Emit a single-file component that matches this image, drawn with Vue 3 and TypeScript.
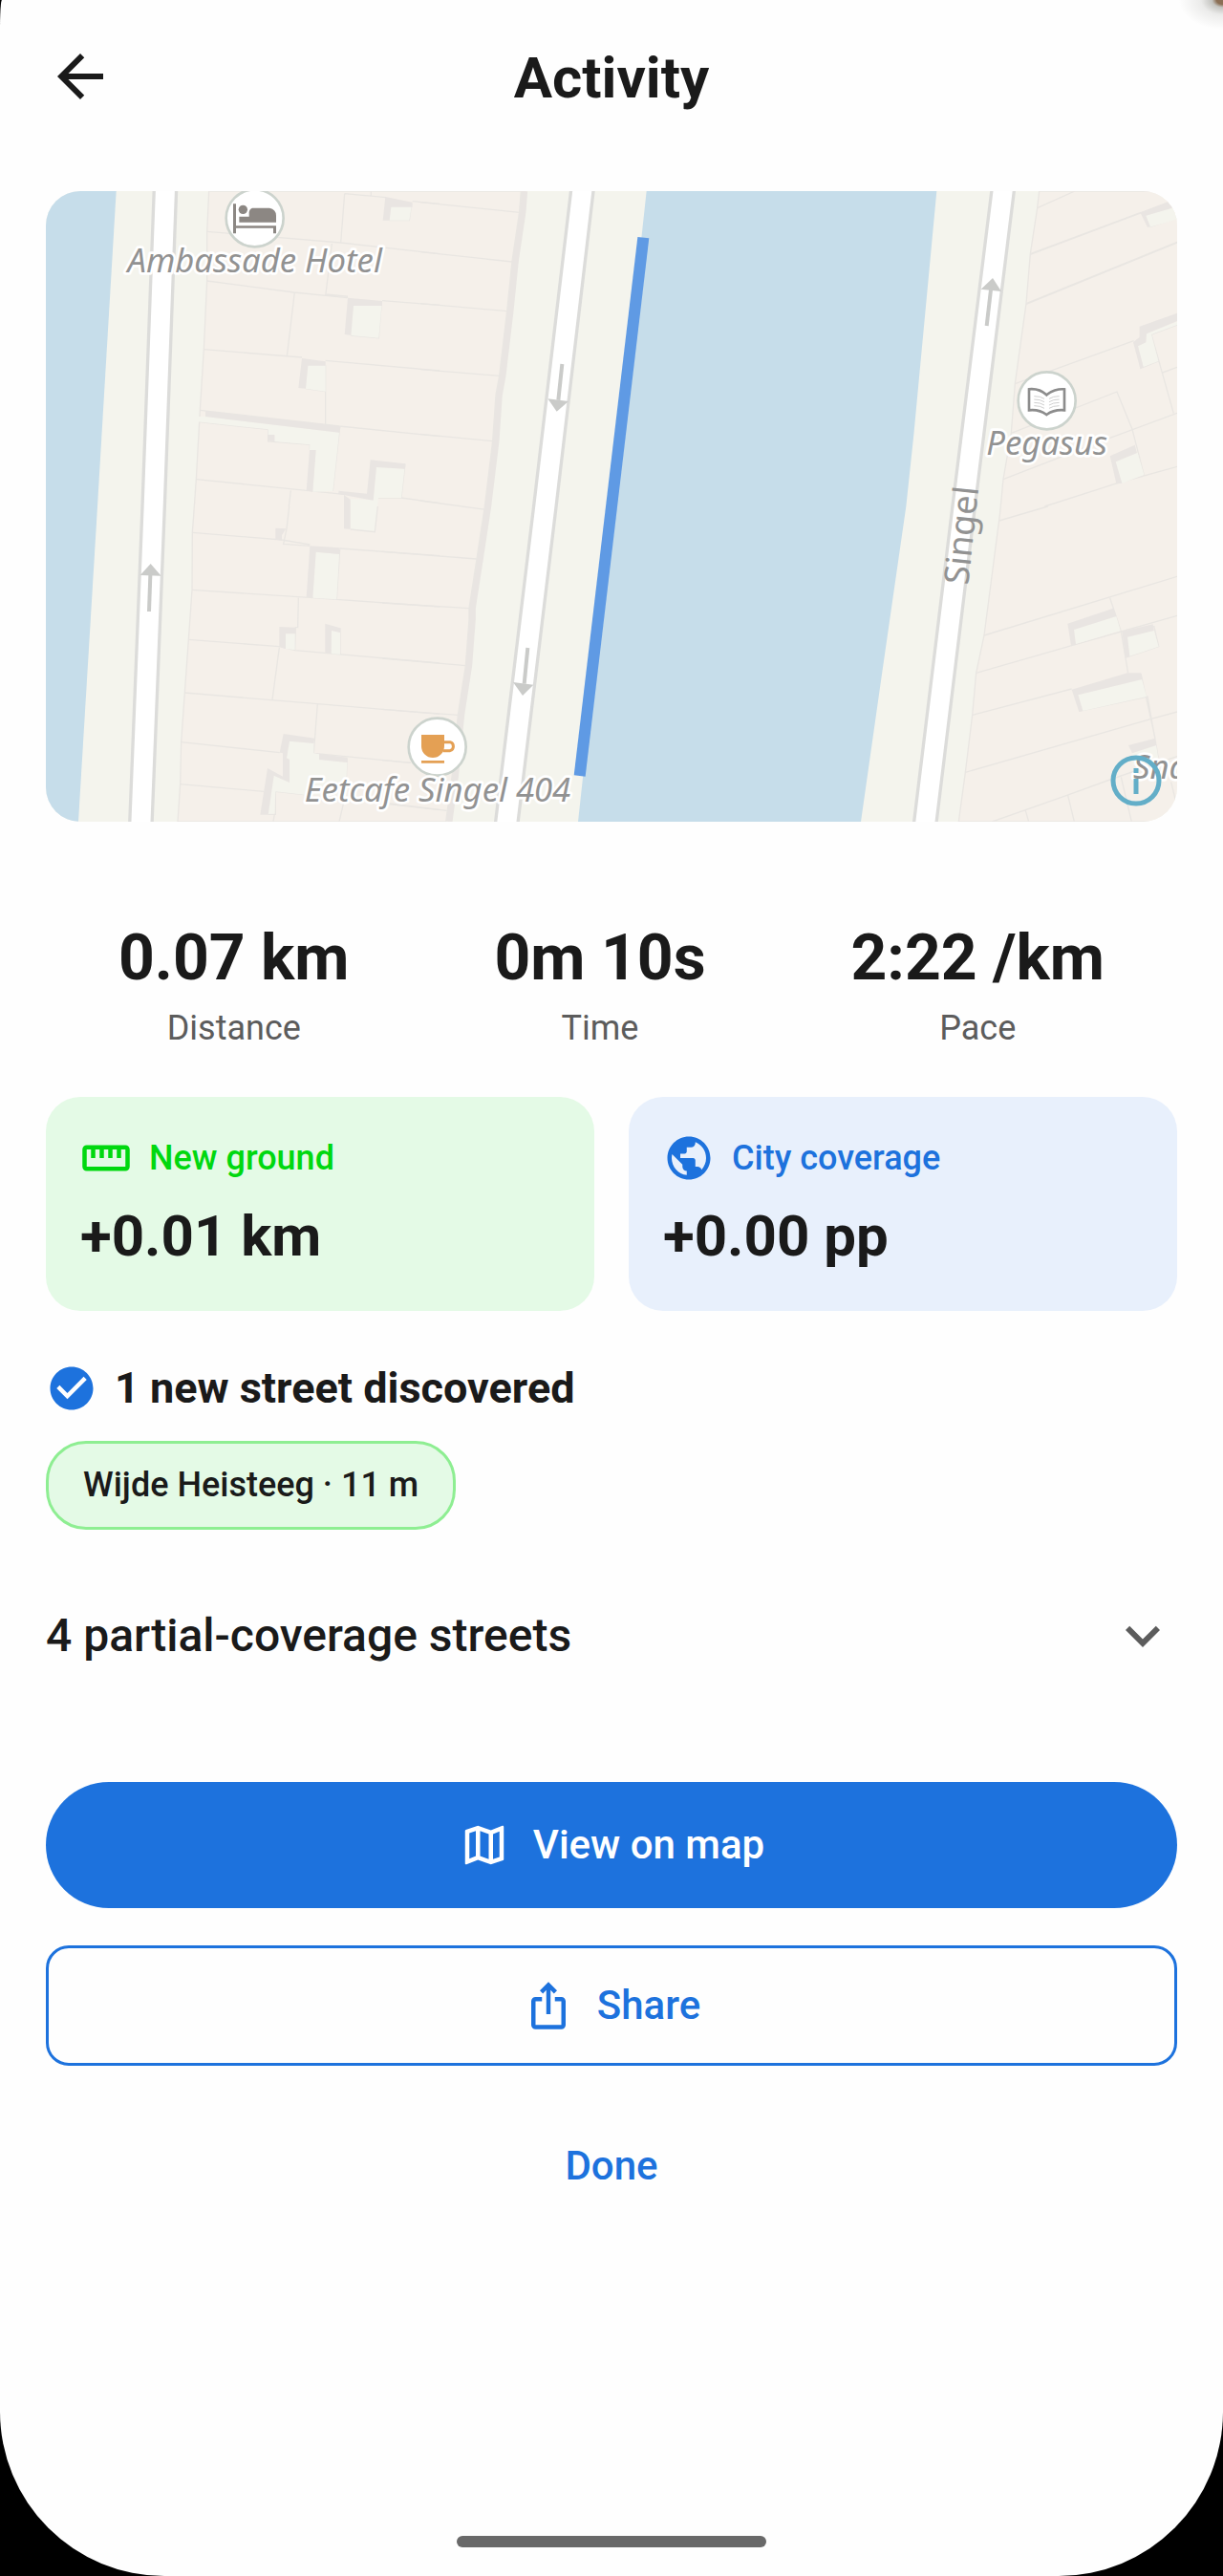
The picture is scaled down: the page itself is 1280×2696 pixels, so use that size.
<script setup lang="ts">
interface Stat {
  value: string
  label: string
}

interface Highlight {
  tone: string
  label: string
  value: string
  icon: string
}

interface MapTile {
  x: number
  y: number
  shade: string
  yard: string
  walls: string
}

const icons = {
  back: 'M20 11H7.83l5.59-5.59L12 4l-8 8 8 8 1.41-1.41L7.83 13H20v-2z',
  ruler:
    'M21 6H3c-1.1 0-2 .9-2 2v8c0 1.1.9 2 2 2h18c1.1 0 2-.9 2-2V8c0-1.1-.9-2-2-2zm0 10H3V8h2v4h2V8h2v4h2V8h2v4h2V8h2v4h2V8h2v8z',
  globe:
    'M12 2C6.48 2 2 6.48 2 12s4.48 10 10 10 10-4.48 10-10S17.52 2 12 2zm-1 17.93c-3.95-.49-7-3.85-7-7.93 0-.62.08-1.21.21-1.79L9 15v1c0 1.1.9 2 2 2v1.93zm6.9-2.54c-.26-.81-1-1.39-1.9-1.39h-1v-3c0-.55-.45-1-1-1H8v-2h2c.55 0 1-.45 1-1V7h2c1.1 0 2-.9 2-2v-.41c2.93 1.19 5 4.06 5 7.41 0 2.08-.8 3.97-2.1 5.39z',
  check:
    'M12 2C6.48 2 2 6.48 2 12s4.48 10 10 10 10-4.48 10-10S17.52 2 12 2zm-2 15l-5-5 1.41-1.41L10 14.17l7.59-7.59L19 8l-9 9z',
  chevron: 'M16.59 8.59L12 13.17 7.41 8.59 6 10l6 6 6-6z',
  map: 'M20.5 3l-.16.03L15 5.1 9 3 3.36 4.9c-.21.07-.36.25-.36.48V20.5c0 .28.22.5.5.5l.16-.03L9 18.9l6 2.1 5.64-1.9c.21-.07.36-.25.36-.48V3.5c0-.28-.22-.5-.5-.5zM10 5.47l4 1.4v11.66l-4-1.4V5.47zm-5 .99l3-1.01v11.7l-3 1.16V6.46zm14 11.08l-3 1.01V6.86l3-1.16v11.84z',
  share:
    'M16 5l-1.42 1.42-1.59-1.59V16h-1.98V4.83L9.42 6.42 8 5l4-4 4 4zm4 5v11c0 1.1-.9 2-2 2H6c-1.11 0-2-.9-2-2V10c0-1.11.89-2 2-2h3v2H6v11h12V10h-3V8h3c1.1 0 2 .89 2 2z',
}

const stats: Stat[] = [
  { value: '0.07 km', label: 'Distance' },
  { value: '0m 10s', label: 'Time' },
  { value: '2:22 /km', label: 'Pace' },
]

const highlights: Highlight[] = [
  { tone: 'green', label: 'New ground', value: '+0.01 km', icon: icons.ruler },
  { tone: 'blue', label: 'City coverage', value: '+0.00 pp', icon: icons.globe },
]

const streets: string[] = ['Wijde Heisteeg · 11 m']

// Roads run top to bottom; each is stroked twice, casing first.
const roads: string[] = [
  'M375 -10L338 990L298 1990',
  'M1685 -10L1567 990L1446 1990',
  'M3006 -10L2882 990L2760 1990',
]

// Building detail, one entry per map tile, in the tile's own coordinates.
const tiles: MapTile[] = [
  {
    x: -24,
    y: -30,
    shade:
      'M1090 48L1175 65V80H1108L1103 122H1082ZM972 365L1080 375V390H990L982 483L962 480ZM828 555L902 565V578H847L840 650L817 648ZM525 720L950 768L945 788L525 738ZM720 795H742V816L720 814ZM852 843H872L862 974L842 970ZM1043 874L1152 886L1150 902L1062 897L1052 1001L942 981L944 971L1032 980ZM960 984L980 998V1092L960 1090Z',
    yard: 'M1108 75L1172 78L1165 122H1103ZM990 386L1078 390L1069 491L982 483ZM847 575L902 577V659L840 650ZM500 738L525 738L945 788L925 972L862 974L872 843H852L853 826L742 816V796L722 795V778L500 754ZM1062 895L1150 902L1140 993H1068L1057 1100L980 1092V997L1052 1000Z',
    walls:
      'M530 157L950 192L1260 227M962 38L950 192M962 38L1092 50M1045 30V45M1175 62L1260 70M922 195L902 360M530 312L803 348L970 365M902 354L970 360V366M805 348L781 548M1080 374L1260 388M520 527L828 552M902 562L1260 594M902 577V768M508 718L945 768M945 768L1260 800M947 770L925 972M506 755L722 778V816L853 826V843M496 935L842 970L960 982M793 970L787 1020M1068 993H1140L1260 1010M1152 886L1140 993M1078 378L1069 491L982 483M840 650L902 659M1172 70L1165 122H1103',
  },
  {
    x: -24,
    y: 990,
    shade:
      'M745 68L778 70L765 90V107L745 104ZM853 124L947 130L945 150L872 143L862 287L842 285ZM757 378L808 380V400H777V447L757 440ZM901 368L948 382V396L921 390L920 463L901 460ZM770 714L868 728L865 744L789 737L780 790L789 795V867L740 845L722 968H697L720 822L768 848V775L758 773ZM882 776L970 788V804L882 795Z',
    yard: 'M872 143L945 150L937 292L862 287ZM777 400H806V450L777 447ZM921 390L948 395V464L920 463ZM789 737L865 744V775L882 778V795L970 804L965 905H835L745 895L742 965H722L740 845L789 867V793L780 790Z',
    walls:
      'M788 0L780 70L770 118L853 124M484 82L765 105L853 120M947 132L1260 155M1066 0L1057 80L980 72M483 262L862 287L1260 315M937 292L947 135M817 287L815 380H808L806 452M472 418L757 440L806 452L1260 492M948 382V464M757 443L735 607M460 585L877 620L1260 652M877 620L865 775L1170 805M449 740L758 773M446 872L708 895M722 967H745L745 895L835 905M742 965L738 990M970 790L965 905L945 990M1100 935L1260 953',
  },
  {
    x: 1176,
    y: -30,
    shade: '',
    yard: '',
    walls:
      'M0 65L311 97M0 221L288 252M0 383L272 407M0 590L248 610M0 793L227 815M0 1002L205 1030',
  },
  {
    x: 1056,
    y: 990,
    shade: '',
    yard: '',
    walls:
      'M0 142L297 165M0 303L273 320M0 477L262 500M0 637L238 655M0 797L90 805M0 930L203 955',
  },
  {
    x: 2376,
    y: -30,
    shade:
      'M1060 97L1200 43V72L1078 107L1092 142L1083 144ZM1058 455L1176 413V438L1080 478L1078 505L1053 517L1070 582L1060 587L1038 505L1058 488ZM965 862L1043 827L1050 852L983 880L1003 947L985 948Z',
    yard: 'M1078 107L1157 82H1200V112L1090 143ZM1080 478L1176 440V450L1095 480L1117 564L1070 582L1053 517L1078 505ZM983 880L1052 852L1072 920L1003 948Z',
    walls:
      'M737 83L855 30M715 227L1062 97M702 383L1176 190M667 635L1040 500M655 790L987 660L1035 778L1072 922M630 935L965 805L1176 727M760 1020L985 948L1176 895M1176 450L1095 480L1165 728M1130 600L1176 583M1060 587L1117 564M1090 143L1176 114M715 229L1150 66M702 385L1176 192',
  },
  {
    x: 2376,
    y: 990,
    shade:
      'M832 368L975 320L985 345L852 387L858 434L843 437ZM1003 392L1100 370L1103 390L1020 410L1027 470L1013 475ZM845 575L1020 523H1062L1066 543L865 592L880 642L868 645ZM1023 750L1107 728L1110 750L1035 775Z',
    yard: 'M852 387L985 345L998 390L858 432ZM1020 410L1103 390L1118 440L1027 470ZM865 592L1065 543L1080 597L880 642ZM1035 775L1110 750L1117 790L1035 812Z',
    walls:
      'M617 45L770 0M570 405L1176 220M545 523L845 437L1000 393L1176 343M965 287L1000 393L1022 523M1103 375L1118 440L1013 475M533 655L845 573M511 835L1092 668L1176 645M868 643L1083 597L1117 790M1062 525L1107 728M595 990L830 907L965 858L1176 785M700 955L710 990M833 907L853 990M1000 850L1033 990M1157 865L1180 960',
  },
]

// Direction arrows on one-way streets: filled head and stroked stem.
const arrows: { head: string; stem: string }[] = [
  { head: 'M329 1170L296 1206L362 1208Z', stem: 'M328 1206L324 1320' },
  { head: 'M1576 652L1641 660L1604 692Z', stem: 'M1621 543L1609 656' },
  { head: 'M1467 1542L1531 1550L1497 1584Z', stem: 'M1513 1434L1502 1547' },
  { head: 'M2973 273L2936 308L3000 315Z', stem: 'M2967 310L2954 423' },
]
</script>

<template>
  <div class="screen">
    <span class="corner-light" aria-hidden="true"></span>

    <header class="top-bar">
      <button class="icon-button" type="button" aria-label="Back">
        <svg class="icon-large" viewBox="0 0 24 24" aria-hidden="true"><path :d="icons.back" /></svg>
      </button>
      <h1>Activity</h1>
    </header>

    <main>
      <section class="map-card" aria-label="Route map">
        <svg class="map" viewBox="0 0 3552 1980" aria-hidden="true">
          <rect class="land" width="3552" height="1980" />
          <path class="water" d="M0 0H221L162 990L102 1980H0Z" />
          <path class="water" d="M1886 0H2797L2725 765L2701 990L2626 1510L2559 1980H1671Z" />

          <path
            class="shade-line"
            d="M1502 0L1497 65L1474 220L1458 377L1434 580L1423 640L1413 785L1388 990L1363 1155L1339 1310V1345L1328 1490L1304 1645L1286 1832L1266 1980"
          />
          <path
            class="building"
            d="M512 0H1492L1487 65L1464 220L1448 377L1424 580L1413 640L1403 785L1378 990L1353 1155L1329 1310V1345L1318 1490L1294 1645L1276 1832L1256 1980H414L422 1862L425 1730L436 1575L448 1408L459 1252L460 1072L466 990L472 905L482 725L484 688L496 497L506 280L506 130Z"
          />
          <path
            class="building"
            d="M3119 0L3113 53L3091 197L3078 353L3043 605L3031 760L3006 905L2996 1010L2946 1395L2921 1513L2909 1645L2887 1825L2866 1980H3560V0Z"
          />

          <g v-for="tile in tiles" :key="`${tile.x}/${tile.y}`" :transform="`translate(${tile.x} ${tile.y})`">
            <path class="walls" :d="tile.walls" />
            <path class="yard" :d="tile.yard" />
            <path class="shade" :d="tile.shade" />
          </g>

          <path v-for="road in roads" :key="`casing ${road}`" class="road-casing" :d="road" />
          <path v-for="road in roads" :key="`fill ${road}`" class="road-fill" :d="road" />

          <g v-for="arrow in arrows" :key="arrow.head" class="arrow">
            <path :d="arrow.stem" />
            <path class="head" :d="arrow.head" />
          </g>

          <path class="route" d="M1876 146L1676 1836" />

          <!-- hotel -->
          <g transform="translate(656 85)">
            <circle class="poi" r="90" />
            <g class="poi-grey">
              <path d="M-68 -45H-59V24H67V48H58V31H-59V48H-68Z" />
              <circle cx="-37" cy="-27" r="14" />
              <path d="M-49 -5H-18V-18Q-17 -29 -8 -32H46Q67 -28 67 -8V13H-49Z" />
            </g>
          </g>
          <!-- cafe -->
          <g transform="translate(1229 1745)">
            <circle class="poi" r="90" />
            <path class="cup" d="M-50 -38H22V-2A36 36 0 0 1 -50 -2ZM-50 43H22V51H-50Z" />
            <path class="cup-handle" d="M22 -15H40A14 14 0 0 1 40 12H18" />
          </g>
          <!-- bookshop -->
          <g transform="translate(3143 658)">
            <circle class="poi" r="90" />
            <path
              class="book"
              d="M-56 -36C-36 -38 -14 -30 -1 -18C12 -30 36 -38 55 -36V30C33 28 13 34 -1 44C-14 34 -36 28 -56 30Z"
            />
            <path
              class="book-lines"
              d="M-40 -14Q-20 -14 -8 -6M-40 -4Q-20 -4 -8 4M-40 6Q-20 6 -8 14M-40 16Q-20 16 -8 24M39 -14Q19 -14 7 -6M39 -4Q19 -4 7 4M39 6Q19 6 7 14M39 16Q19 16 7 24"
            />
          </g>

          <g class="place">
            <text x="656" y="255">Ambassade Hotel</text>
            <text x="1230" y="1918">Eetcafe Singel 404</text>
            <text x="3143" y="829">Pegasus</text>
            <text class="cut-off" x="3414" y="1846">Sna</text>
          </g>
          <text class="street" transform="translate(2896 1238) rotate(-84)">Singel</text>
        </svg>
        <button class="map-info" type="button" aria-label="Map attribution">
          <svg viewBox="0 0 54 54" aria-hidden="true">
            <circle cx="27" cy="27" r="24" />
            <path d="M27 14V19M27 25V41" />
          </svg>
        </button>
      </section>

      <dl class="stats">
        <div v-for="stat in stats" :key="stat.label" class="stat">
          <dt>{{ stat.label }}</dt>
          <dd>{{ stat.value }}</dd>
        </div>
      </dl>

      <section class="highlights">
        <article v-for="item in highlights" :key="item.label" class="highlight" :class="item.tone">
          <h2>
            <svg class="icon" viewBox="0 0 24 24" aria-hidden="true"><path :d="item.icon" /></svg>
            {{ item.label }}
          </h2>
          <p>{{ item.value }}</p>
        </article>
      </section>

      <section class="discovered">
        <h2>
          <svg class="icon" viewBox="0 0 24 24" aria-hidden="true"><path :d="icons.check" /></svg>
          1 new street discovered
        </h2>
        <ul>
          <li v-for="street in streets" :key="street">{{ street }}</li>
        </ul>
      </section>

      <button class="expander" type="button" aria-expanded="false">
        4 partial-coverage streets
        <svg class="icon-large" viewBox="0 0 24 24" aria-hidden="true"><path :d="icons.chevron" /></svg>
      </button>

      <div class="actions">
        <button class="action filled" type="button">
          <svg class="icon" viewBox="0 0 24 24" aria-hidden="true"><path :d="icons.map" /></svg>
          View on map
        </button>
        <button class="action outlined" type="button">
          <svg class="icon" viewBox="0 0 24 24" aria-hidden="true"><path :d="icons.share" /></svg>
          Share
        </button>
        <button class="action plain" type="button">Done</button>
      </div>
    </main>

    <footer class="home-bar"><span></span></footer>
  </div>
</template>

<style>
body {
  background: #000;
}
</style>

<style scoped>
.screen {
  position: relative;
  display: flex;
  flex-direction: column;
  min-height: 100vh;
  overflow: hidden;
  box-sizing: border-box;
  background: #fefefe;
  border-radius: 2px 0 172px 172px / 30px 0 172px 172px;
  color: #1a1a1a;
  font-family: Roboto, "Liberation Sans", sans-serif;
}

.corner-light {
  position: absolute;
  top: 0;
  right: 0;
  width: 48px;
  height: 32px;
  background: radial-gradient(48px 32px at 100% 0, #8b6f55 0 14%, #c4c4c0 24%, #ebebea 48%, #fefefe 96%);
}

h1,
h2,
p,
dl,
dd,
ul {
  margin: 0;
  padding: 0;
}

button {
  margin: 0;
  padding: 0;
  border: 0;
  background: none;
  color: inherit;
  font: inherit;
  cursor: pointer;
}

svg {
  display: block;
  flex: none;
}

.icon {
  width: 54px;
  height: 54px;
  fill: currentColor;
}

.icon-large {
  width: 72px;
  height: 72px;
  fill: currentColor;
}

.top-bar {
  display: grid;
  grid-template-columns: 72px 1fr 72px;
  align-items: start;
  padding: 44px 48px 80px;
}

h1 {
  font-size: 60px;
  font-weight: 700;
  line-height: 76px;
  text-align: center;
}

main {
  padding: 0 48px;
}

.map-card {
  position: relative;
  overflow: hidden;
  border-radius: 36px;
}

.map {
  width: 100%;
  height: auto;
}

.land,
.yard {
  fill: #f4f4ed;
}

.water {
  fill: #c6ddea;
}

.building {
  fill: #f5f0ea;
  stroke: #e9e6e2;
  stroke-width: 4;
}

.shade {
  fill: #e9e5e2;
}

.shade-line {
  fill: none;
  stroke: #e9e5e2;
  stroke-width: 21;
}

.walls {
  fill: none;
  stroke: #e9e6e2;
  stroke-width: 4;
}

.road-casing {
  fill: none;
  stroke: #dcdcda;
  stroke-width: 80;
}

.road-fill {
  fill: none;
  stroke: #fff;
  stroke-width: 60;
}

.arrow {
  fill: none;
  stroke: #cacbc9;
  stroke-width: 12;
}

.arrow .head {
  fill: #cacbc9;
  stroke: none;
}

.route {
  fill: none;
  stroke: #5f9ae4;
  stroke-width: 36;
}

.poi {
  fill: #fff;
  stroke: #ccd3cd;
  stroke-width: 8;
}

.poi-grey {
  fill: #8c8783;
}

.cup {
  fill: #e4a054;
}

.cup-handle {
  fill: none;
  stroke: #e4a054;
  stroke-width: 9;
}

.book {
  fill: none;
  stroke: #8c8c8c;
  stroke-width: 8;
}

.book-lines {
  fill: none;
  stroke: #cfcfcf;
  stroke-width: 3;
}

.place {
  fill: #929292;
  stroke: #fff;
  stroke-width: 16;
  stroke-linejoin: round;
  paint-order: stroke;
  font-family: "Noto Sans", sans-serif;
  font-size: 104px;
  font-style: italic;
  text-anchor: middle;
}

.place .cut-off {
  text-anchor: start;
}

.street {
  fill: #929292;
  font-family: "Noto Sans", sans-serif;
  font-size: 108px;
}

.map-info {
  position: absolute;
  right: 16px;
  bottom: 16px;
  width: 54px;
  height: 54px;
}

.map-info svg {
  fill: none;
  stroke: #63aec8;
  stroke-width: 5;
}

.stats {
  display: flex;
  justify-content: space-around;
  margin-top: 104px;
}

.stat {
  display: flex;
  flex-direction: column-reverse;
  gap: 6px;
  text-align: center;
}

.stat dt {
  color: #5c5c5c;
  font-size: 36px;
  line-height: 56px;
}

.stat dd {
  font-size: 66px;
  font-weight: 700;
  line-height: 78px;
}

.highlights {
  display: grid;
  grid-template-columns: 1fr 1fr;
  gap: 36px;
  margin-top: 44px;
}

.highlight {
  display: flex;
  flex-direction: column;
  gap: 12px;
  padding: 36px;
  border-radius: 36px;
}

.highlight h2 {
  display: flex;
  align-items: center;
  gap: 18px;
  font-size: 36px;
  font-weight: 500;
  line-height: 56px;
}

.highlight p {
  font-size: 60px;
  font-weight: 700;
  line-height: 84px;
}

.green {
  background: #e4fae6;
}

.green h2 {
  color: #00d80f;
}

.blue {
  background: #e8f0fc;
}

.blue h2 {
  color: #1d72dd;
}

.discovered {
  margin-top: 54px;
}

.discovered h2 {
  display: flex;
  align-items: center;
  gap: 18px;
  font-size: 45px;
  font-weight: 700;
  line-height: 54px;
}

.discovered .icon {
  color: #1d72dd;
}

.discovered ul {
  display: flex;
  flex-wrap: wrap;
  gap: 24px;
  margin-top: 28px;
  list-style: none;
}

.discovered li {
  padding: 18px 36px;
  border: 3px solid #8eee92;
  border-radius: 42px;
  background: #e4fae6;
  font-size: 36px;
  font-weight: 500;
  line-height: 51px;
}

.expander {
  display: flex;
  align-items: center;
  justify-content: space-between;
  width: 100%;
  margin-top: 75px;
  font-size: 48px;
  font-weight: 500;
  line-height: 72px;
}

.expander .icon-large {
  color: #5c5c5c;
}

.actions {
  display: flex;
  flex-direction: column;
  gap: 39px;
  margin-top: 117px;
}

.action {
  display: flex;
  align-items: center;
  justify-content: center;
  gap: 24px;
  color: #1d72dd;
  font-size: 42px;
  font-weight: 500;
  line-height: 60px;
}

.filled {
  padding: 36px;
  border-radius: 66px;
  background: #1d72dd;
  color: #fff;
}

.outlined {
  padding: 30px;
  border: 3px solid #1d72dd;
  border-radius: 24px;
}

.plain {
  padding: 36px;
}

.home-bar {
  display: flex;
  justify-content: center;
  margin-top: auto;
  padding: 30px;
}

.home-bar span {
  width: 324px;
  height: 12px;
  border-radius: 6px;
  background: #696969;
}
</style>
